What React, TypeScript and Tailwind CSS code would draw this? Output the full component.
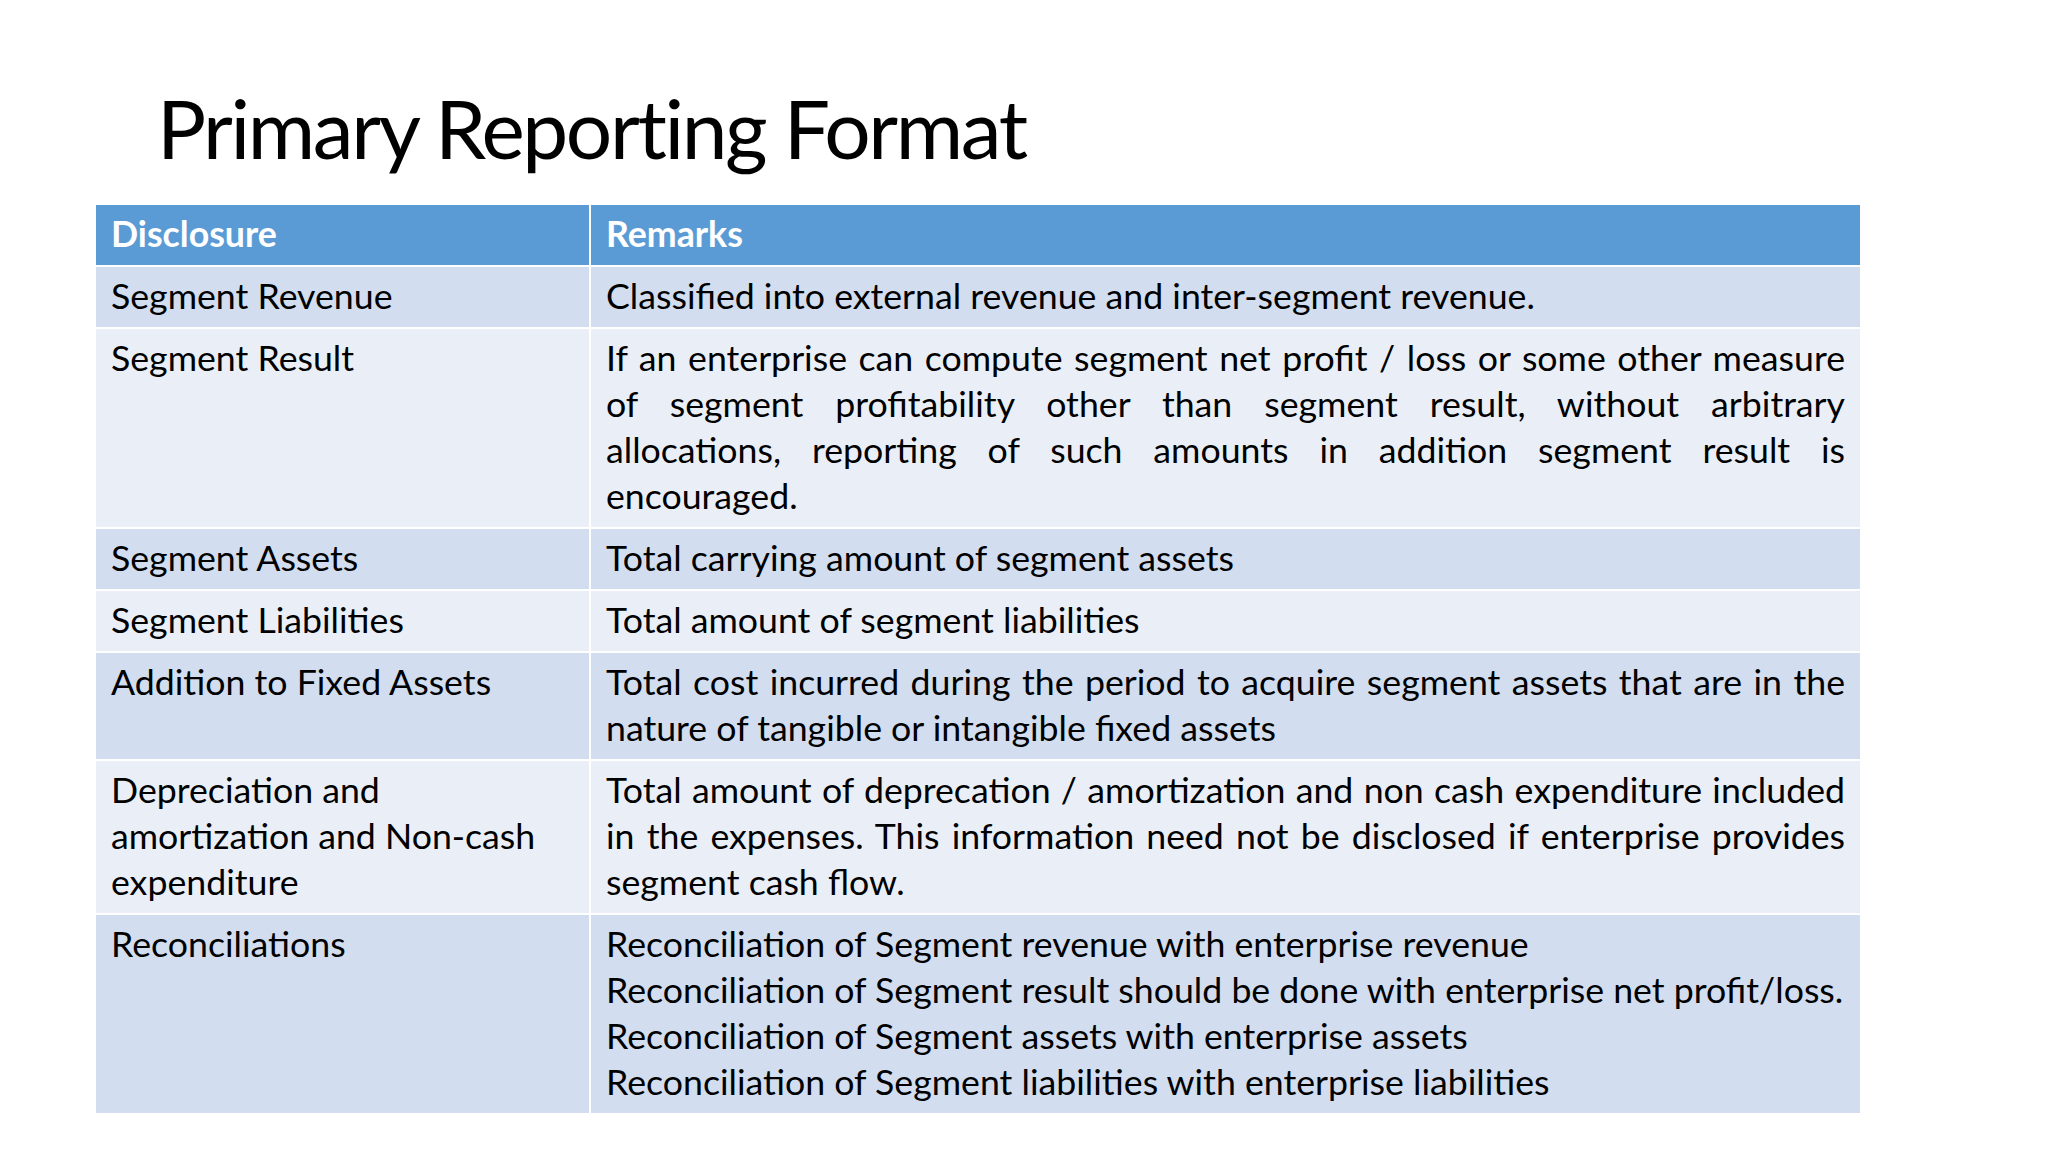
import React from "react";

type Row = {
  label: string[];
  lines: string[];
  justified?: number; // how many leading lines are stretched edge to edge
};

const rows: Row[] = [
  {
    label: ["Segment Revenue"],
    lines: ["Classified into external revenue and inter-segment revenue."],
  },
  {
    label: ["Segment Result"],
    lines: [
      "If an enterprise can compute segment net profit / loss or some other measure",
      "of segment profitability other than segment result, without arbitrary",
      "allocations, reporting of such amounts in addition segment result is",
      "encouraged.",
    ],
    justified: 3,
  },
  {
    label: ["Segment Assets"],
    lines: ["Total carrying amount of segment assets"],
  },
  {
    label: ["Segment Liabilities"],
    lines: ["Total amount of segment liabilities"],
  },
  {
    label: ["Addition to Fixed Assets"],
    lines: [
      "Total cost incurred during the period to acquire segment assets that are in the",
      "nature of tangible or intangible fixed assets",
    ],
    justified: 1,
  },
  {
    label: ["Depreciation and", "amortization and Non-cash", "expenditure"],
    lines: [
      "Total amount of deprecation / amortization and non cash expenditure included",
      "in the expenses. This information need not be disclosed if enterprise provides",
      "segment cash flow.",
    ],
    justified: 2,
  },
  {
    label: ["Reconciliations"],
    lines: [
      "Reconciliation of Segment revenue with enterprise revenue",
      "Reconciliation of Segment result should be done with enterprise net profit/loss.",
      "Reconciliation of Segment assets with enterprise assets",
      "Reconciliation of Segment liabilities with enterprise liabilities",
    ],
  },
];

export default function App() {
  return (
    <div className="w-[2048px] h-[1152px] bg-white text-black font-[Lato,'Open_Sans',sans-serif] overflow-hidden">
      <h1 className="pt-[86px] pl-[157px] text-[82px] leading-none font-normal tracking-[-2.4px]">
        Primary Reporting Format
      </h1>

      <div className="mt-[37px] ml-[96px] w-[1764px] grid grid-cols-[493px_1fr] gap-[2px] bg-white text-[35.7px] leading-[46px]">
        <div className="bg-[#5b9bd5] text-white font-bold pl-[15px] pt-[6px] pb-[8px]">
          Disclosure
        </div>
        <div className="bg-[#5b9bd5] text-white font-bold pl-[15px] pt-[6px] pb-[8px]">
          Remarks
        </div>

        {rows.map((row, i) => {
          const bg = i % 2 === 0 ? "bg-[#d2deef]" : "bg-[#eaeff7]";
          return (
            <React.Fragment key={row.label[0]}>
              <div className={`${bg} pl-[15px] pr-[15px] pt-[6px] pb-[8px]`}>
                {row.label.map((l) => (
                  <span key={l} className="block whitespace-nowrap">
                    {l}
                  </span>
                ))}
              </div>
              <div className={`${bg} pl-[15px] pr-[15px] pt-[6px] pb-[8px]`}>
                {row.lines.map((l, j) =>
                  j < (row.justified ?? 0) ? (
                    <span
                      key={j}
                      className="block whitespace-nowrap text-justify [text-align-last:justify]"
                    >
                      {l}
                    </span>
                  ) : (
                    <span key={j} className="block whitespace-nowrap">
                      {l}
                    </span>
                  )
                )}
              </div>
            </React.Fragment>
          );
        })}
      </div>
    </div>
  );
}
